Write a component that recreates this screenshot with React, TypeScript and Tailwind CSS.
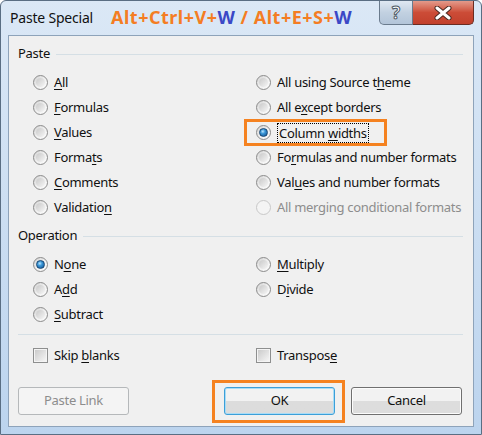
import React from 'react';

const font = "font-['Segoe_UI','Noto_Sans','Open_Sans',sans-serif]";

function Label({ text, u, disabled }: { text: string; u: number; disabled?: boolean }) {
  return (
    <span className={`whitespace-nowrap ${disabled ? 'text-[#8d8d8d]' : 'text-[#101010]'}`}>
      {text.slice(0, u)}
      <span className={disabled ? '' : 'underline underline-offset-2 decoration-1'}>{text[u]}</span>
      {text.slice(u + 1)}
    </span>
  );
}

function Radio({ checked, disabled }: { checked?: boolean; disabled?: boolean }) {
  return (
    <span
      className={`relative flex h-[15px] w-[15px] shrink-0 items-center justify-center rounded-full border ${
        disabled ? 'border-[#c8c8c8] bg-[#f4f4f4]' : 'border-[#8b8b8b] bg-gradient-to-br from-[#d2d2d2] via-[#f0f0f0] to-[#fcfcfc]'
      }`}
    >
      {!disabled && <span className="absolute inset-[2px] rounded-full bg-gradient-to-br from-[#c9c9c9] to-[#f6f6f6]" />}
      {checked && (
        <span className="relative h-[9px] w-[9px] rounded-full border border-[#1b4b78] bg-[radial-gradient(circle_at_40%_35%,#bfe8ff_0%,#3c98d8_35%,#0e4d8e_100%)]" />
      )}
    </span>
  );
}

function RadioRow({ text, u, checked, disabled, boxed }: { text: string; u: number; checked?: boolean; disabled?: boolean; boxed?: boolean }) {
  return (
    <div className="relative flex h-[25px] items-center gap-[6px]">
      <Radio checked={checked} disabled={disabled} />
      {boxed ? (
        <span className="border border-dotted border-black px-[1px] leading-[18px]">
          <Label text={text} u={u} />
        </span>
      ) : (
        <Label text={text} u={u} disabled={disabled} />
      )}
      {boxed && <span className="pointer-events-none absolute left-[-12px] top-[-1px] h-[27px] w-[143px] border-[3px] border-[#f58220]" />}
    </div>
  );
}

function Check({ text, u }: { text: string; u: number }) {
  return (
    <div className="flex h-[25px] items-center gap-[6px]">
      <span className="flex h-[15px] w-[15px] items-center justify-center border border-[#8e8f8f] bg-[#f4f4f4]">
        <span className="h-[11px] w-[11px] bg-gradient-to-br from-[#cbcbcb] to-[#f5f5f5]" />
      </span>
      <Label text={text} u={u} />
    </div>
  );
}

function GroupHeader({ title }: { title: string }) {
  return (
    <div className="flex h-[20px] items-center gap-[6px] pr-[10px]">
      <span className="text-[#101010]">{title}</span>
      <span className="h-px flex-1 bg-[#d5dfe5]" />
    </div>
  );
}

function Button({ children, variant }: { children: React.ReactNode; variant?: 'default' | 'disabled' }) {
  const base = 'flex h-[28px] w-[111px] items-center justify-center rounded-[3px] border';
  if (variant === 'disabled')
    return <div className={`${base} border-[#b5b8ba] bg-[#f4f4f4] text-[#8d8d8d]`}>{children}</div>;
  if (variant === 'default')
    return (
      <div className={`${base} border-[#3c9fd8] bg-gradient-to-b from-[#f2f2f2] from-50% to-[#dcdcdc] to-50% text-[#101010] shadow-[inset_0_0_0_1px_#a9dcf6]`}>
        {children}
      </div>
    );
  return (
    <div className={`${base} border-[#707070] bg-gradient-to-b from-[#f2f2f2] from-50% to-[#dddddd] to-50% text-[#101010] shadow-[inset_0_0_0_1px_#fcfcfc]`}>
      {children}
    </div>
  );
}

export default function App() {
  return (
    <div className={`${font} flex h-[435px] w-[482px] flex-col overflow-hidden rounded-t-[6px] border border-[#5a6e83] bg-gradient-to-b from-[#dbe8f6] to-[#bcd4ee] text-[13px] tracking-[-0.3px]`}>
      {/* title bar */}
      <div className="flex h-[34px] shrink-0 items-start">
        <span className="ml-[9px] mt-[6px] text-[14px] tracking-[-0.2px] text-[#111]">Paste Special</span>
        <span className="ml-[18px] mt-[3px] text-[18px] font-bold tracking-[0.5px] text-[#f47d23]">
          Alt+Ctrl+V+<span className="text-[#3b48c6]">W</span> / Alt+E+S+<span className="text-[#3b48c6]">W</span>
        </span>
        <div className="ml-auto mr-[7px] flex">
          <div className="flex h-[24px] w-[34px] items-center justify-center rounded-bl-[5px] border border-t-0 border-[#6a7b8d] bg-gradient-to-b from-[#dfe8f2] via-[#c2d1e1] to-[#b3c5d9]">
            <span className="text-[17px] font-bold leading-none text-white [-webkit-text-stroke:1px_#4f5964]">?</span>
          </div>
          <div className="flex h-[24px] w-[61px] items-center justify-center rounded-br-[5px] border border-l-0 border-t-0 border-[#6a2c22] bg-gradient-to-b from-[#e39a8b] via-[#cc4c37] to-[#c2402c]">
            <svg width="18" height="14" viewBox="0 0 18 14">
              <path d="M3 2 L15 12 M15 2 L3 12" stroke="#4a2a22" strokeWidth="5" strokeLinecap="round" />
              <path d="M3 2 L15 12 M15 2 L3 12" stroke="#ffffff" strokeWidth="3" strokeLinecap="round" />
            </svg>
          </div>
        </div>
      </div>

      {/* client area */}
      <div className="mx-[7px] mb-[7px] flex flex-1 flex-col border border-[#8ea3ba] bg-[#f0f0f0] pl-[9px] pt-[8px]">
        <GroupHeader title="Paste" />
        <div className="mt-[6px] grid grid-cols-[223px_1fr] pl-[15px]">
          <div>
            <RadioRow text="All" u={0} />
            <RadioRow text="Formulas" u={0} />
            <RadioRow text="Values" u={0} />
            <RadioRow text="Formats" u={5} />
            <RadioRow text="Comments" u={0} />
            <RadioRow text="Validation" u={9} />
          </div>
          <div>
            <RadioRow text="All using Source theme" u={18} />
            <RadioRow text="All except borders" u={5} />
            <RadioRow text="Column widths" u={7} checked boxed />
            <RadioRow text="Formulas and number formats" u={2} />
            <RadioRow text="Values and number formats" u={3} />
            <RadioRow text="All merging conditional formats" u={8} disabled />
          </div>
        </div>

        <div className="mt-[6px]">
          <GroupHeader title="Operation" />
        </div>
        <div className="mt-[6px] grid grid-cols-[223px_1fr] pl-[15px]">
          <div>
            <RadioRow text="None" u={1} checked />
            <RadioRow text="Add" u={1} />
            <RadioRow text="Subtract" u={0} />
          </div>
          <div>
            <RadioRow text="Multiply" u={0} />
            <RadioRow text="Divide" u={1} />
          </div>
        </div>

        <div className="mr-[10px] mt-[7px] h-px bg-[#d5dfe5]" />
        <div className="mt-[8px] grid grid-cols-[223px_1fr] pl-[15px]">
          <Check text="Skip blanks" u={5} />
          <Check text="Transpose" u={8} />
        </div>

        <div className="mt-[19px] flex items-center pr-[10px]">
          <Button variant="disabled">Paste Link</Button>
          <div className="relative ml-[95px]">
            <Button variant="default">OK</Button>
            <span className="pointer-events-none absolute left-[-12px] top-[-7px] h-[43px] w-[133px] border-[3px] border-[#f58220]" />
          </div>
          <div className="ml-[16px]">
            <Button>Cancel</Button>
          </div>
        </div>
      </div>
    </div>
  );
}
